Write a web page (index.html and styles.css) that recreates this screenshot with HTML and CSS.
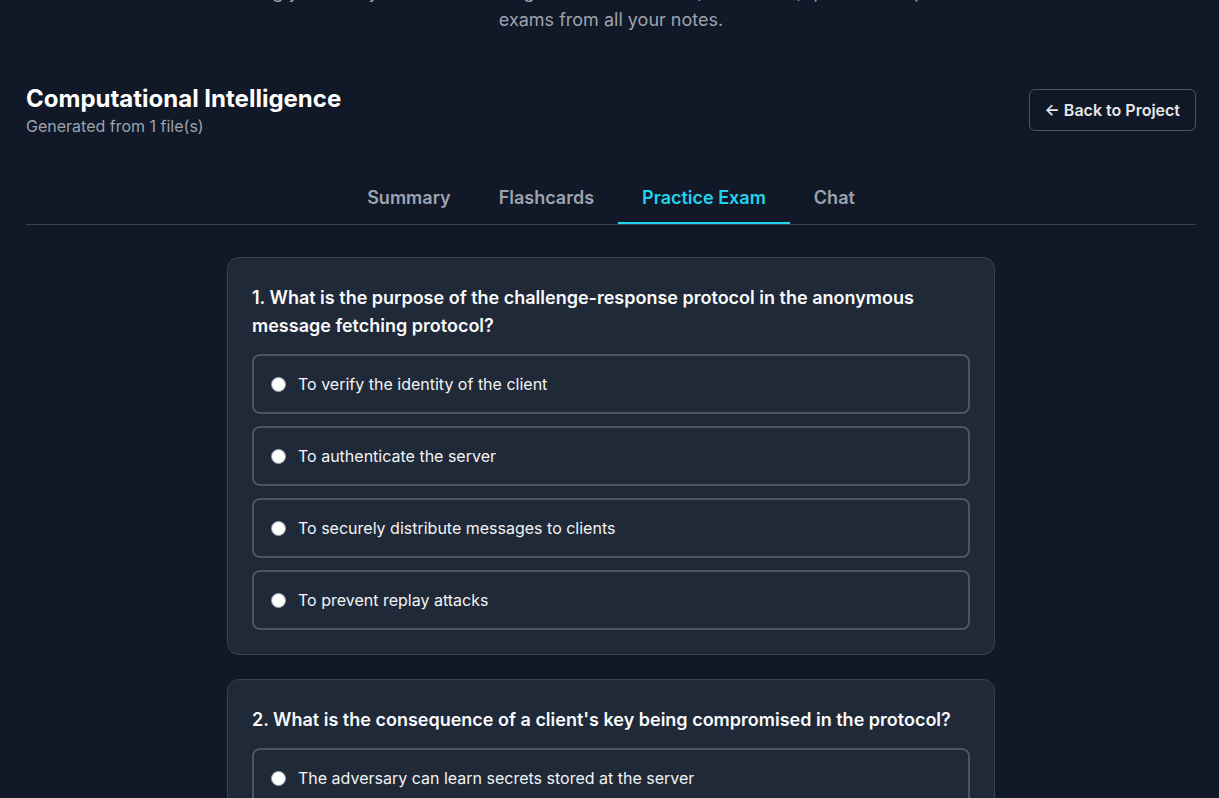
FILE: index.html
```html
<!DOCTYPE html>
<html lang="en">
<head>
<meta charset="utf-8">
<title>Computational Intelligence – Practice Exam</title>
<link rel="stylesheet" href="styles.css">
</head>
<body>
<div class="page">
  <p class="hero">Bring your study materials to life: generate summaries, flashcards, quizzes and practice<br>exams from all your notes.</p>

  <header class="project-head">
    <div class="titles">
      <h1 class="title">Computational Intelligence</h1>
      <div class="subtitle">Generated from 1 file(s)</div>
    </div>
    <button class="back-btn">← Back to Project</button>
  </header>

  <nav class="tabs">
    <span class="tab">Summary</span>
    <span class="tab">Flashcards</span>
    <span class="tab active">Practice Exam</span>
    <span class="tab">Chat</span>
  </nav>

  <main class="exam">
    <section class="question-card">
      <h2 class="question">1. What is the purpose of the challenge-response protocol in the anonymous message fetching protocol?</h2>
      <div class="options">
        <label class="option"><input type="radio" name="q1"><span>To verify the identity of the client</span></label>
        <label class="option"><input type="radio" name="q1"><span>To authenticate the server</span></label>
        <label class="option"><input type="radio" name="q1"><span>To securely distribute messages to clients</span></label>
        <label class="option"><input type="radio" name="q1"><span>To prevent replay attacks</span></label>
      </div>
    </section>

    <section class="question-card">
      <h2 class="question">2. What is the consequence of a client's key being compromised in the protocol?</h2>
      <div class="options">
        <label class="option"><input type="radio" name="q2"><span>The adversary can learn secrets stored at the server</span></label>
        <label class="option"><input type="radio" name="q2"><span>The adversary can impersonate the client</span></label>
        <label class="option"><input type="radio" name="q2"><span>The server must revoke all keys</span></label>
        <label class="option"><input type="radio" name="q2"><span>Nothing, the protocol remains secure</span></label>
      </div>
    </section>
  </main>
</div>
</body>
</html>
```

FILE: styles.css
```css
* { box-sizing: border-box; }

html, body {
  margin: 0;
  background: #111827;
  overflow: hidden;
}

body {
  font-family: Inter, "Noto Sans", "Liberation Sans", sans-serif;
  color: #f3f4f6;
}

.page {
  padding: 0 23px 0 26px;
}

.hero {
  margin: -22px auto 0;
  max-width: 900px;
  text-align: center;
  font-size: 18px;
  line-height: 28px;
  color: #9ca3af;
}

.project-head {
  display: flex;
  align-items: center;
  justify-content: space-between;
  margin-top: 48px;
}

.title {
  margin: 2px 0 0;
  font-size: 24px;
  line-height: 30px;
  font-weight: 700;
  color: #ffffff;
}

.subtitle {
  font-size: 16px;
  line-height: 24px;
  color: #9ca3af;
}

.back-btn {
  font-family: inherit;
  font-size: 16px;
  font-weight: 600;
  color: #e5e7eb;
  background: transparent;
  border: 1px solid #4b5563;
  border-radius: 6px;
  padding: 0 15px;
  height: 42px;
}

.tabs {
  display: flex;
  justify-content: center;
  margin-top: 32px;
  border-bottom: 1px solid #374151;
}

.tab {
  padding: 14px 24px 10px;
  font-size: 18px;
  line-height: 28px;
  font-weight: 600;
  color: #9ca3af;
  border-bottom: 2px solid transparent;
}

.tab.active {
  color: #22d3ee;
  border-bottom-color: #22d3ee;
}

.exam {
  max-width: 768px;
  margin: 32px auto 0;
  display: flex;
  flex-direction: column;
  gap: 24px;
}

.question-card {
  background: #1f2937;
  border: 1px solid #374151;
  border-radius: 12px;
  padding: 24px;
}

.question {
  margin: 0 0 14px;
  padding-top: 2px;
  font-size: 18px;
  line-height: 28px;
  font-weight: 600;
  color: #f9fafb;
}

.options {
  display: flex;
  flex-direction: column;
  gap: 12px;
}

.option {
  display: flex;
  align-items: center;
  gap: 12px;
  padding: 16px 16px;
  border: 2px solid #4b5563;
  border-radius: 8px;
  font-size: 16px;
  line-height: 24px;
  color: #f3f4f6;
}

.option input {
  appearance: none;
  -webkit-appearance: none;
  margin: 0 0 0 1px;
  width: 15px;
  height: 15px;
  border-radius: 50%;
  background: #ffffff;
  border: 1px solid #9ca3af;
  flex: none;
}
```
